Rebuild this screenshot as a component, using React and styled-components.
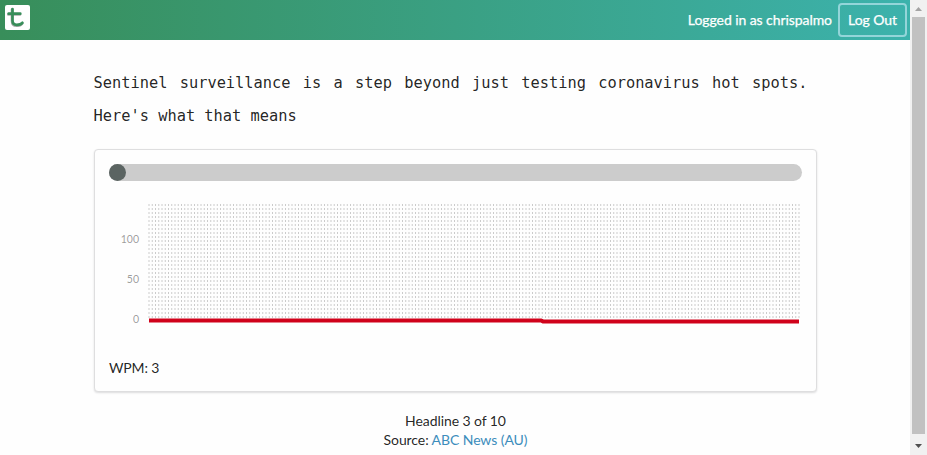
import React from "react";
import styled, { createGlobalStyle } from "styled-components";

const GlobalStyle = createGlobalStyle`
  * { box-sizing: border-box; }
  html, body { margin: 0; height: 100%; overflow: hidden; }
  body {
    background: #fefefe;
    color: rgba(0, 0, 0, 0.87);
    font-family: Lato, "Liberation Sans", sans-serif;
    font-size: 14px;
    line-height: 19px;
  }
`;

const Window = styled.div`
  display: flex;
  height: 455px;
  overflow: hidden;
`;

const Page = styled.div`
  flex: 1;
  min-width: 0;
`;

const NavBar = styled.header`
  display: flex;
  align-items: center;
  height: 40px;
  padding: 0 3px 0 5px;
  background: linear-gradient(to right, #388e5a, #3cb2ac);
  color: #fff;
`;

const Logo = styled.svg`
  display: block;
  margin-bottom: 5px;
`;

const UserName = styled.span`
  margin-left: auto;
  margin-right: 6px;
  padding-bottom: 1px;
  letter-spacing: -0.07px;
  -webkit-text-stroke: 0.25px #fff;
  white-space: nowrap;
`;

const LogOutButton = styled.button`
  width: 69px;
  height: 34px;
  padding: 0 0 1px;
  border: 2px solid #93d5d9;
  border-radius: 4px;
  background: transparent;
  color: #fff;
  font: inherit;
  letter-spacing: -0.07px;
  -webkit-text-stroke: 0.25px #fff;
`;

const Content = styled.main`
  width: 723px;
  margin-left: 94px;
  padding-top: 27px;
`;

const Headline = styled.p`
  width: 714px;
  margin: 0 0 16px -0.5px;
  font-family: "DejaVu Sans Mono", monospace;
  font-size: 15.35px;
  line-height: 33px;
  text-align: justify;
`;

const Card = styled.section`
  height: 243px;
  padding: 14px;
  border: 1px solid #dededf;
  border-radius: 4px;
  box-shadow: 0 1px 2px rgba(34, 36, 38, 0.15);
  background: #fefefe;
`;

const ProgressTrack = styled.div`
  height: 17px;
  border-radius: 9px;
  background: #ccc;
`;

const ProgressFill = styled.div`
  width: 17px;
  height: 17px;
  border-radius: 50%;
  background: #5b6462;
`;

const ChartRow = styled.div`
  display: flex;
  height: 125px;
  margin-top: 22px;
`;

const Axis = styled.div`
  width: 30px;
  padding-top: 28px;
  color: rgba(0, 0, 0, 0.4);
  font-size: 10.5px;
  line-height: 16px;
  text-align: right;
`;

const AxisLabel = styled.div`
  height: 40px;
`;

const Chart = styled.svg`
  display: block;
  margin-left: 9px;
`;

const Speed = styled.div`
  margin-top: 30px;
  letter-spacing: -0.15px;
`;

const Footer = styled.footer`
  margin-top: 19px;
  letter-spacing: -0.08px;
  text-align: center;
`;

const SourceLink = styled.a`
  color: #3c8dbc;
  text-decoration: none;
`;

const ScrollBar = styled.div`
  display: flex;
  flex-direction: column;
  align-items: center;
  width: 17px;
  background: #f1f1f1;
`;

const ScrollThumb = styled.div`
  width: 13px;
  height: 417px;
  background: #c1c1c1;
`;

const Arrow = styled.svg`
  display: block;
  flex: none;
`;

const gridLines = Array.from({ length: 201 }, (_, i) => 1 + i * 3.25);

export default function App() {
  return (
    <>
      <GlobalStyle />
      <Window>
        <Page>
          <NavBar>
            <Logo width="25" height="25" viewBox="0 0 25 25">
              <rect width="25" height="25" rx="2" fill="#fff" />
              <g fill="none" strokeLinecap="round" strokeLinejoin="round">
                <path d="M7 4.5V16Q7 20.8 11.5 20.8Q15.5 20.8 17.2 18.4M3.3 9.4H15" stroke="#aaa" strokeWidth="2.6" />
                <path d="M7.5 4V15.5Q7.5 19.8 11.8 19.8Q15.8 19.8 17.4 17.8M3.7 8.7H15.3" stroke="#388e5a" strokeWidth="2.7" />
              </g>
            </Logo>
            <UserName>Logged in as chrispalmo</UserName>
            <LogOutButton>Log Out</LogOutButton>
          </NavBar>
          <Content>
            <Headline>
              Sentinel surveillance is a step beyond just testing coronavirus hot spots. Here's what that means
            </Headline>
            <Card>
              <ProgressTrack>
                <ProgressFill />
              </ProgressTrack>
              <ChartRow>
                <Axis>
                  <AxisLabel>100</AxisLabel>
                  <AxisLabel>50</AxisLabel>
                  <AxisLabel>0</AxisLabel>
                </Axis>
                <Chart width="654" height="125" viewBox="0 0 654 125">
                  {gridLines.map((x) => (
                    <line key={x} x1={x} x2={x} y1="1" y2="116" stroke="#000" strokeOpacity="0.2" strokeDasharray="2 2" />
                  ))}
                  <path d="M1 117.5H393L395 118.4H651" fill="none" stroke="#d0021b" strokeWidth="4" />
                </Chart>
              </ChartRow>
              <Speed>WPM: 3</Speed>
            </Card>
            <Footer>
              <div>Headline 3 of 10</div>
              <div>
                Source: <SourceLink>ABC News (AU)</SourceLink>
              </div>
            </Footer>
          </Content>
        </Page>
        <ScrollBar>
          <Arrow width="17" height="17" viewBox="0 0 17 17">
            <path d="M5 11L8.5 7L12 11Z" fill="#a3a3a3" />
          </Arrow>
          <ScrollThumb />
          <Arrow width="17" height="21" viewBox="0 0 17 21">
            <path d="M5 10H12L8.5 14Z" fill="#505050" />
          </Arrow>
        </ScrollBar>
      </Window>
    </>
  );
}
